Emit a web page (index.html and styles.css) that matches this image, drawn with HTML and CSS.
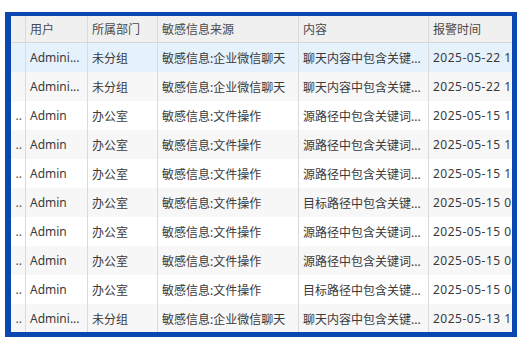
FILE: index.html
```html
<!DOCTYPE html>
<html lang="zh-CN">
<head>
    <meta charset="UTF-8">
    <title>敏感信息报警</title>
    <link rel="stylesheet" href="styles.css">
</head>
<body>
    <div class="frame">
        <div class="grid">
            <!-- 表头 -->
            <div class="row head">
                <div class="cell"></div>
                <div class="cell">用户</div>
                <div class="cell">所属部门</div>
                <div class="cell">敏感信息来源</div>
                <div class="cell">内容</div>
                <div class="cell">报警时间</div>
            </div>

            <!-- 报警记录 -->
            <div class="row selected">
                <div class="cell"></div>
                <div class="cell">Admini...</div>
                <div class="cell">未分组</div>
                <div class="cell">敏感信息:企业微信聊天</div>
                <div class="cell">聊天内容中包含关键...</div>
                <div class="cell time">2025-05-22 1</div>
            </div>
            <div class="row">
                <div class="cell"></div>
                <div class="cell">Admini...</div>
                <div class="cell">未分组</div>
                <div class="cell">敏感信息:企业微信聊天</div>
                <div class="cell">聊天内容中包含关键...</div>
                <div class="cell time">2025-05-22 1</div>
            </div>
            <div class="row">
                <div class="cell more">..</div>
                <div class="cell">Admin</div>
                <div class="cell">办公室</div>
                <div class="cell">敏感信息:文件操作</div>
                <div class="cell">源路径中包含关键词...</div>
                <div class="cell time">2025-05-15 1</div>
            </div>
            <div class="row">
                <div class="cell more">..</div>
                <div class="cell">Admin</div>
                <div class="cell">办公室</div>
                <div class="cell">敏感信息:文件操作</div>
                <div class="cell">源路径中包含关键词...</div>
                <div class="cell time">2025-05-15 1</div>
            </div>
            <div class="row">
                <div class="cell more">..</div>
                <div class="cell">Admin</div>
                <div class="cell">办公室</div>
                <div class="cell">敏感信息:文件操作</div>
                <div class="cell">源路径中包含关键词...</div>
                <div class="cell time">2025-05-15 1</div>
            </div>
            <div class="row">
                <div class="cell more">..</div>
                <div class="cell">Admin</div>
                <div class="cell">办公室</div>
                <div class="cell">敏感信息:文件操作</div>
                <div class="cell">目标路径中包含关键...</div>
                <div class="cell time">2025-05-15 0</div>
            </div>
            <div class="row">
                <div class="cell more">..</div>
                <div class="cell">Admin</div>
                <div class="cell">办公室</div>
                <div class="cell">敏感信息:文件操作</div>
                <div class="cell">源路径中包含关键词...</div>
                <div class="cell time">2025-05-15 0</div>
            </div>
            <div class="row">
                <div class="cell more">..</div>
                <div class="cell">Admin</div>
                <div class="cell">办公室</div>
                <div class="cell">敏感信息:文件操作</div>
                <div class="cell">源路径中包含关键词...</div>
                <div class="cell time">2025-05-15 0</div>
            </div>
            <div class="row">
                <div class="cell more">..</div>
                <div class="cell">Admin</div>
                <div class="cell">办公室</div>
                <div class="cell">敏感信息:文件操作</div>
                <div class="cell">目标路径中包含关键...</div>
                <div class="cell time">2025-05-15 0</div>
            </div>
            <div class="row">
                <div class="cell more">..</div>
                <div class="cell">Admini...</div>
                <div class="cell">未分组</div>
                <div class="cell">敏感信息:企业微信聊天</div>
                <div class="cell">聊天内容中包含关键...</div>
                <div class="cell time">2025-05-13 1</div>
            </div>
        </div>
    </div>
</body>
</html>
```
FILE: styles.css
```css
html, body {
    margin: 0;
    padding: 0;
    background: #fff;
}

body {
    font-family: "Noto Sans", "Noto Sans CJK SC", sans-serif;
    font-size: 12px;
    color: #3a3a3a;
}

/* 蓝色外框 */
.frame {
    margin: 12px 0 0 5px;
    width: 512px;
    height: 325px;
    box-sizing: border-box;
    border: 5px solid #0a47b0;
    border-top-width: 4px;
    border-left-width: 6px;
    overflow: hidden;
    background: #fff;
}

.grid {
    display: flex;
    flex-direction: column;
}

/* 每一行 */
.row {
    display: grid;
    grid-template-columns: 14px 62px 70px 141px 130px 1fr;
    height: 29px;
}

.row:nth-child(odd) {
    background: #f7f7f7;
}

.row.selected {
    background: #e5f1fb;
}

.row.head {
    height: 27px;
    background: #f0f0f0;
    border-bottom: 1px solid #d6d6d6;
    box-sizing: border-box;
    color: #4a4a4a;
}

.cell {
    display: flex;
    align-items: center;
    padding-left: 4px;
    white-space: nowrap;
    overflow: hidden;
    border-left: 1px solid #dadada;
}

.cell:first-child {
    border-left: none;
    padding-left: 0;
    justify-content: flex-end;
    padding-right: 3px;
}

.time {
    letter-spacing: 0.5px;
}

.more {
    color: #555;
}
```
